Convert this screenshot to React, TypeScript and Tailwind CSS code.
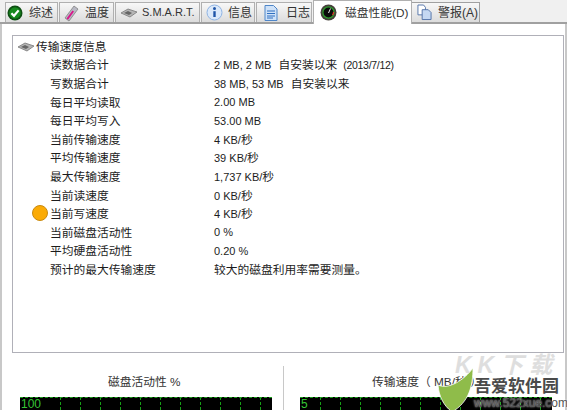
import React from "react";

const font = { fontFamily: '"Liberation Sans", "Noto Sans CJK SC", sans-serif' };

const Cn = ({ children }: { children: React.ReactNode }) => <span className="text-[11.75px]">{children}</span>;

const rows: [string, React.ReactNode][] = [
  ["读数据合计", <>2 MB, 2 MB <span className="ml-[4px]" /><Cn>自安装以来</Cn><span className="ml-[6px] text-[10.5px] tracking-[-0.3px]">(2013/7/12)</span></>],
  ["写数据合计", <>38 MB, 53 MB <span className="ml-[4px]" /><Cn>自安装以来</Cn></>],
  ["每日平均读取", "2.00 MB"],
  ["每日平均写入", "53.00 MB"],
  ["当前传输速度", <>4 KB/<Cn>秒</Cn></>],
  ["平均传输速度", <>39 KB/<Cn>秒</Cn></>],
  ["最大传输速度", <>1,737 KB/<Cn>秒</Cn></>],
  ["当前读速度", <>0 KB/<Cn>秒</Cn></>],
  ["当前写速度", <>4 KB/<Cn>秒</Cn></>],
  ["当前磁盘活动性", "0 %"],
  ["平均硬盘活动性", "0.20 %"],
  ["预计的最大传输速度", <Cn>较大的磁盘利用率需要测量。</Cn>],
];

const DiskIcon = () => (
  <svg width="18" height="10" viewBox="0 0 18 10">
    <path d="M1 5 L8 1 L17 4 L10 9 Z" fill="#b5b5b5" stroke="#777" strokeWidth="0.8" />
    <path d="M4 5 L8 3 L12 5 L9 7 Z" fill="#666" />
  </svg>
);

const CheckIcon = () => (
  <svg width="16" height="16" viewBox="0 0 16 16">
    <circle cx="8" cy="8" r="7.5" fill="#0d4f12" />
    <circle cx="8" cy="8" r="5.8" fill="#178a1e" />
    <path d="M4.4 8.2 L7 10.8 L11.6 5.4" fill="none" stroke="#fff" strokeWidth="2.2" />
  </svg>
);

const ThermoIcon = () => (
  <svg width="16" height="18" viewBox="0 0 16 18">
    <path d="M2 14 L11 2 L15 5 L6 17 Z" fill="#b9b9c4" stroke="#777" strokeWidth="0.7" />
    <path d="M3.5 14.5 L9.5 6.5 L11 7.6 L5 15.8 Z" fill="#d8178a" />
  </svg>
);

const InfoIcon = () => (
  <svg width="17" height="17" viewBox="0 0 17 17">
    <circle cx="8.5" cy="8.5" r="7.5" fill="#dbe9fa" stroke="#8fb4e4" />
    <circle cx="8.5" cy="4.5" r="1.5" fill="#1f55a8" />
    <path d="M8.5 7.2 V13" stroke="#1f55a8" strokeWidth="2.4" />
  </svg>
);

const DocIcon = () => (
  <svg width="14" height="16" viewBox="0 0 14 16">
    <path d="M1 .5 H9.5 L13 4 V15.5 H1 Z" fill="#cfe2f8" stroke="#4f86c8" />
    <path d="M3 6 H11 M3 8.5 H11 M3 11 H11 M3 13 H9" stroke="#2f6fc0" />
  </svg>
);

const GaugeIcon = () => (
  <svg width="17" height="17" viewBox="0 0 17 17">
    <circle cx="8.5" cy="8.5" r="8" fill="#45403a" />
    <circle cx="8.5" cy="8.5" r="5.6" fill="#0a0a0a" stroke="#2da02d" strokeWidth="1.2" />
    <path d="M8.5 9 L10.5 4.5" stroke="#e8e8e8" strokeWidth="1" />
    <path d="M12.5 11 A5 5 0 0 0 13.6 8" stroke="#e0362c" strokeWidth="1.3" fill="none" />
  </svg>
);

const PagesIcon = () => (
  <svg width="15" height="17" viewBox="0 0 16 17">
    <path d="M1 .5 H7 L9 3 V11 H1 Z" fill="#fff" stroke="#5272a8" />
    <path d="M5.5 5.5 H12 L15 8.5 V16 H5.5 Z" fill="#c5d8f2" stroke="#5272a8" />
  </svg>
);

const tabs = [
  { label: "综述", icon: <CheckIcon />, cls: "w-[53px] pl-[1px] gap-[6px] text-[12px]" },
  { label: "温度", icon: <ThermoIcon />, cls: "w-[55px] pl-[3px] gap-[6px] text-[12px]" },
  { label: "S.M.A.R.T.", icon: <DiskIcon />, cls: "w-[85px] pl-[4px] gap-[4px] text-[11px]" },
  { label: "信息", icon: <InfoIcon />, cls: "w-[54px] pl-[4px] gap-[5px] text-[12px]" },
  { label: "日志", icon: <DocIcon />, cls: "w-[56px] pl-[7px] gap-[8px] text-[12px]" },
];

const Chart = ({ top, cols }: { top: string; cols: string }) => (
  <div className="relative h-[13px] w-[252px] overflow-hidden bg-black">
    <div className="absolute left-0 right-0 top-0 border-t border-dashed border-[#17a017]" />
    <div className={`absolute inset-0 flex ${cols}`}>
      {Array.from({ length: 12 }).map((_, i) => (
        <div key={i} className="w-[20px] shrink-0 border-l border-dashed border-[#17a017]" />
      ))}
    </div>
    <span className="absolute left-[1px] top-[1px] text-[12px] leading-[12px] text-[#35c435]">{top}</span>
  </div>
);

export default function App() {
  return (
    <div className="relative h-[410px] w-[567px] overflow-hidden bg-white text-[#1c1c1c]" style={font}>
      <div className="flex h-[24px] items-end border-b-2 border-[#a0a0a0] bg-[#f0f0f0] pl-[5px]">
        {tabs.map((t) => (
          <div
            key={t.label}
            className={`mr-[1px] flex h-[20px] shrink-0 items-center border border-b-0 border-[#b0b0b0] bg-gradient-to-b from-[#f8f8f8] to-[#dcdcdc] text-[#333] ${t.cls}`}
          >
            {t.icon}
            <span className="whitespace-nowrap">{t.label}</span>
          </div>
        ))}
        <div className="z-10 -mb-[2px] flex h-[24px] w-[99px] shrink-0 items-center gap-[8px] border border-b-0 border-[#b0b0b0] bg-white pl-[6px] text-[11.75px] text-[#333]">
          <GaugeIcon />
          <span className="whitespace-nowrap">磁盘性能(D)</span>
        </div>
        <div className="flex h-[20px] w-[68px] shrink-0 items-center gap-[6px] border border-b-0 border-l-0 border-[#a0a0a0] bg-gradient-to-b from-[#f8f8f8] to-[#dcdcdc] pl-[5px] text-[12px] text-[#333]">
          <PagesIcon />
          <span className="whitespace-nowrap">警报(A)</span>
        </div>
      </div>

      <div className="border-l-2 border-r-2 border-[#c8c8c8] pl-[10px] pt-[11px]">
        <div className="relative h-[318px] w-[552px] border border-[#b0b0b8] pl-[4px] pt-[2px]">
          <div className="flex h-[18px] items-center gap-[1px] text-[11.75px]">
            <DiskIcon />
            <span>传输速度信息</span>
          </div>
          <div className="pl-[33px]">
            {rows.map(([k, v]) => (
              <div key={k} className="flex h-[18.6px] items-center">
                <span className="w-[164px] shrink-0 whitespace-nowrap text-[11.75px]">{k}</span>
                <span className="whitespace-nowrap text-[11px]">{v}</span>
              </div>
            ))}
          </div>
          <div className="absolute left-[19px] top-[169px] h-[16px] w-[16px] rounded-full border border-[#c98a10] bg-[#fbab05]" />
        </div>

        <div className="mt-[13px] flex">
          <div className="h-[45px] w-[272px] shrink-0 border-r border-[#c8c8c8] pl-[8px]">
            <div className="flex h-[31px] items-center whitespace-nowrap pl-[88px] text-[11.75px] text-[#333]">磁盘活动性 %</div>
            <Chart top="100" cols="pl-[40px]" />
          </div>
          <div className="h-[45px] w-[279px] shrink-0 pl-[16px]">
            <div className="flex h-[31px] items-center whitespace-nowrap pl-[72px] text-[11.75px] text-[#333]">传输速度（ MB/秒 ）</div>
            <Chart top="5" cols="pl-[20px]" />
          </div>
        </div>
      </div>

      {/* watermark */}
      <div className="absolute left-[437px] top-[353px] h-[57px] w-[130px]">
        <svg width="37" height="44" viewBox="0 0 37 44" className="absolute left-0 top-[15px]">
          <path d="M1 17 C12 22 27 12 36 0 C36 18 32 34 15 44 C6 37 2 28 1 17 Z" fill="#8fbc4a" stroke="#fff" strokeWidth="0.8" />
        </svg>
        <span className="absolute left-[18px] top-[0px] whitespace-nowrap text-[23px] font-bold italic leading-[24px] tracking-[6px] text-[#dedede]">KK下载</span>
        <span className="absolute left-[37px] top-[24px] whitespace-nowrap text-[17px] font-bold leading-[20px] text-[#4a4a4a] [text-shadow:0_0_2px_#fff]">吾爱软件园</span>
        <span className="absolute left-[37px] top-[44px] whitespace-nowrap text-[12px] leading-[12px] text-[#555] [text-shadow:0_0_2px_#fff]">www.522xue.com</span>
      </div>
    </div>
  );
}
